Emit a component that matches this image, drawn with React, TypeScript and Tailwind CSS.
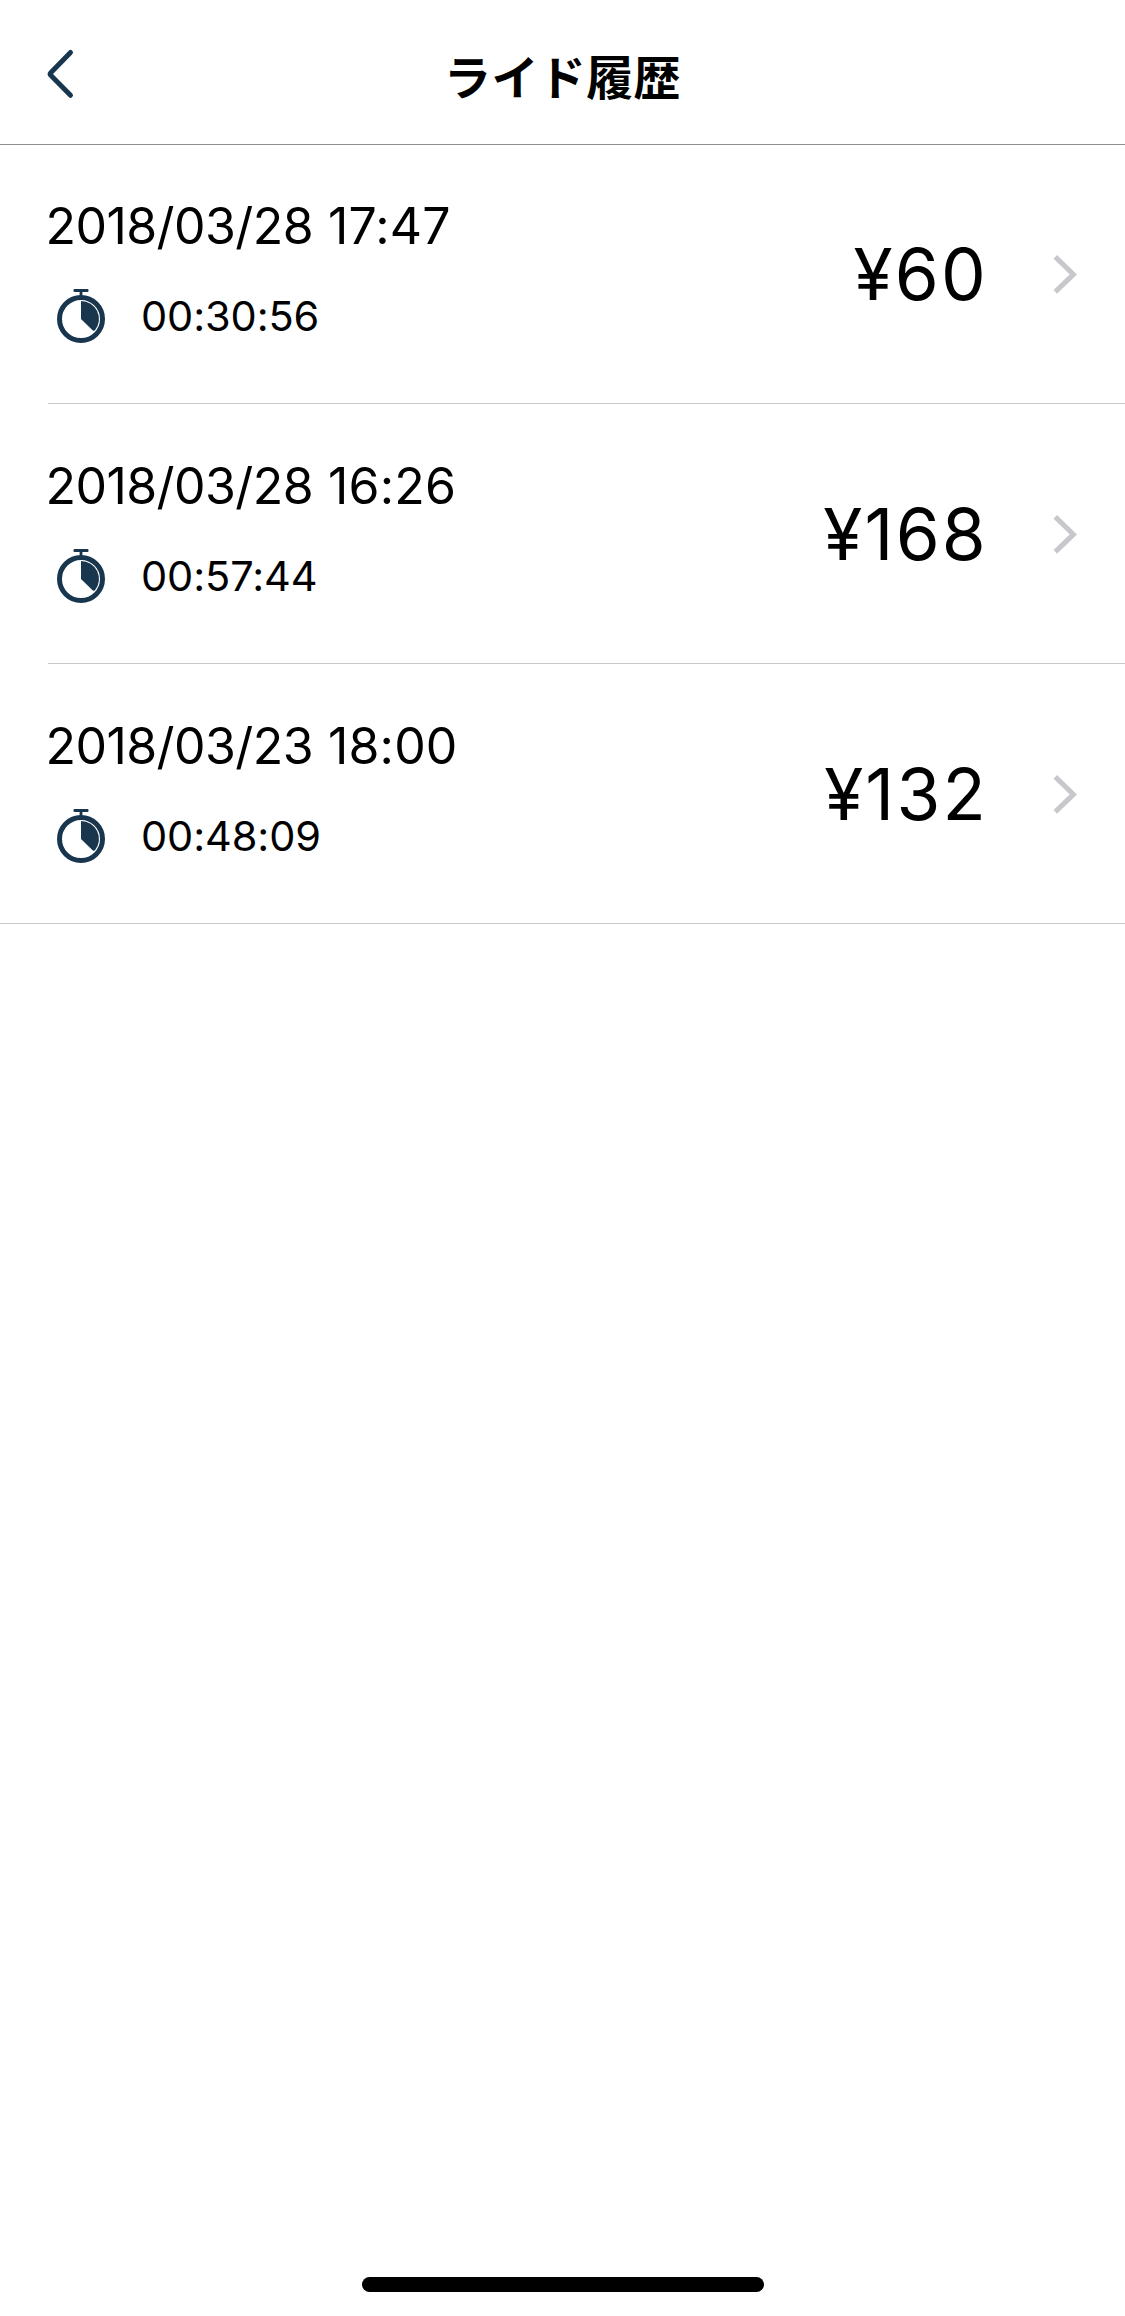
interface Ride {
  id: number;
  date: string;
  time: string;
  duration: string;
  price: string;
}

const rides: Ride[] = [
  { id: 1, date: "2018/03/28", time: "17:47", duration: "00:30:56", price: "¥60" },
  { id: 2, date: "2018/03/28", time: "16:26", duration: "00:57:44", price: "¥168" },
  { id: 3, date: "2018/03/23", time: "18:00", duration: "00:48:09", price: "¥132" },
];

function BackIcon() {
  return (
    <svg width="30" height="54" viewBox="0 0 30 54" fill="none">
      <path
        d="M25.5 5.5L6 25.4Q4.4 27 6 28.6L25.5 48.3"
        stroke="#19364f"
        strokeWidth="5"
        strokeLinecap="round"
        strokeLinejoin="round"
      />
    </svg>
  );
}

function ChevronIcon() {
  return (
    <svg width="24" height="40" viewBox="0 0 24 40" fill="none">
      <path d="M2.3 2.9L20.4 20.4L2.3 37.9" stroke="#c7c7cc" strokeWidth="5" />
    </svg>
  );
}

function StopwatchIcon() {
  return (
    <svg width="48" height="56" viewBox="0 0 48 56" fill="none">
      <rect x="16.5" y="1" width="15" height="3" rx="1" fill="#19364f" />
      <rect x="22.6" y="3" width="2.8" height="6" fill="#19364f" />
      <circle cx="24" cy="31" r="21.5" stroke="#19364f" strokeWidth="5" />
      <path
        d="M24 31V13A18 18 0 0 1 38 42.3Q36.8 43.3 35.6 42.2Z"
        fill="#19364f"
      />
    </svg>
  );
}

function RideRow({ ride }: { ride: Ride }) {
  return (
    <div className="flex h-[259px] items-start justify-between pr-12">
      <div className="flex flex-col pt-[52px]">
        <div className="-ml-[2.5px] h-[60px] text-[50px] leading-[60px]">
          <span className="tracking-[-0.57px]">{ride.date}</span>{" "}
          <span className="ml-px tracking-[0.15px]">{ride.time}</span>
        </div>
        <div className="mt-8 flex h-[56px] items-center pl-[9px]">
          <StopwatchIcon />
          <div className="ml-9 text-[41.5px] leading-[56px] tracking-[-0.1px]">
            {ride.duration}
          </div>
        </div>
      </div>
      <div className="flex h-[260px] items-center">
        <div className="text-[71px] leading-[80px] tracking-[2.2px] [font-kerning:none]">
          {ride.price}
        </div>
        <div className="ml-[65px]">
          <ChevronIcon />
        </div>
      </div>
    </div>
  );
}

export default function App() {
  return (
    <div className="flex h-[2316px] w-[1125px] flex-col bg-white font-['Inter','Noto_Sans_CJK_JP',sans-serif] text-black">
      {/* Header */}
      <header className="grid h-[145px] shrink-0 grid-cols-[1fr_auto_1fr] items-start border-b border-[#8e8e8e]">
        <button className="w-fit pt-[47px] pl-[45px]">
          <BackIcon />
        </button>
        <h1 className="pt-10 font-['Noto_Sans_CJK_JP',sans-serif] text-[47px] leading-[70px] font-bold tracking-[0.4px]">
          ライド履歴
        </h1>
      </header>

      {/* Ride list */}
      <main className="-mt-px flex-1">
        <div className="border-b border-[#c8c7cc] pl-12">
          {rides.map((ride, i) => (
            <div
              key={ride.id}
              className={
                i < rides.length - 1 ? "border-b border-[#c8c7cc]" : ""
              }
            >
              <RideRow ride={ride} />
            </div>
          ))}
        </div>
      </main>

      {/* Home indicator */}
      <div className="mb-6 ml-px h-[15px] w-[402px] self-center rounded-full bg-black" />
    </div>
  );
}
